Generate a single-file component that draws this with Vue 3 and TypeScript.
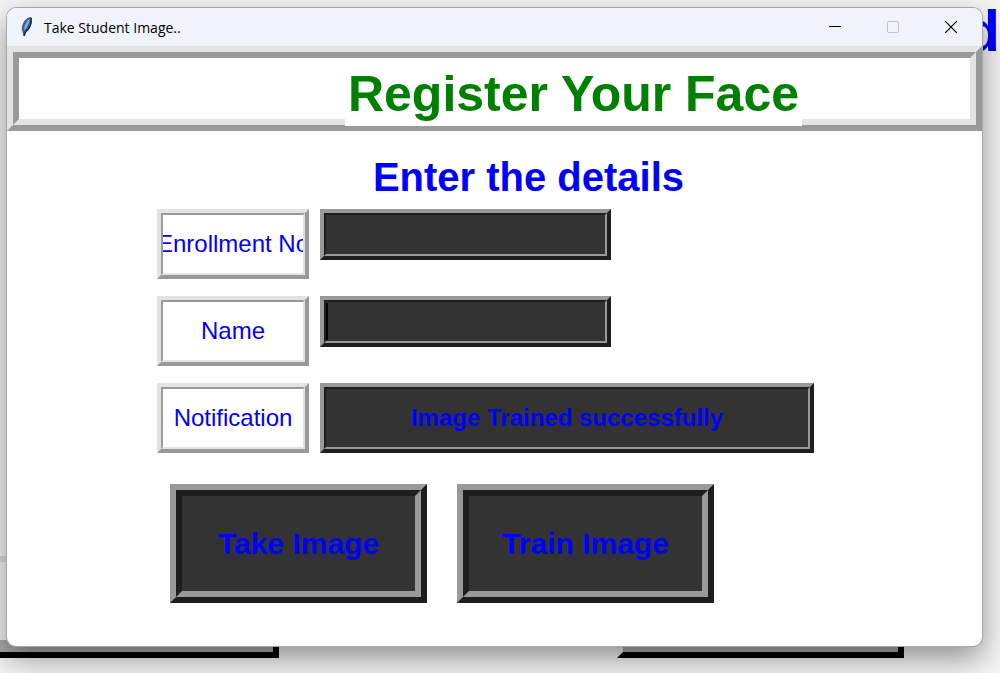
<script setup lang="ts">
import { ref } from 'vue'

const enrollment = ref('')
const studentName = ref('')
const notification = ref('Image Trained successfully')
</script>

<template>
  <div class="desktop">
    <div class="behind" aria-hidden="true">
      <span class="behind-title">d</span>
      <div class="behind-panel"></div>
      <div class="behind-button first"></div>
      <div class="behind-button second"></div>
    </div>

    <main class="window">
      <header class="titlebar">
        <svg class="feather" viewBox="0 0 16 22" width="16" height="22" aria-hidden="true">
          <path d="M12 1.5C8 2 5 5 4 9C3 12 3 14 4 15.5L5 20L6.5 16.5C9.500 14.500 11.500 11 12.200 7Z" fill="#3c6da8" stroke="#4b5058" stroke-width="1" />
          <path d="M10.500 3C7.500 5 5.500 9 5 14L7 12.500C9 9 10.500 6 10.500 3Z" fill="#83add8" />
          <path d="M12.300 2C12.500 6 11 12 6.500 16L5 20" fill="none" stroke="#18243b" stroke-width="1.300" />
        </svg>
        <span class="caption">Take Student Image..</span>
        <button class="control" type="button" aria-label="Minimize">
          <svg viewBox="0 0 12 12" width="12" height="12"><path d="M0 5.500H12" stroke="#000" /></svg>
        </button>
        <button class="control" type="button" aria-label="Maximize" disabled>
          <svg viewBox="0 0 12 12" width="12" height="12"><rect x=".5" y=".5" width="11" height="11" rx="1" fill="none" stroke="#bfc2cc" /></svg>
        </button>
        <button class="control" type="button" aria-label="Close">
          <svg viewBox="0 0 12 12" width="12" height="12"><path d="M0 0L12 12M12 0L0 12" stroke="#000" stroke-width="1.200" /></svg>
        </button>
      </header>

      <div class="banner">
        <div class="banner-inner">
          <h1>Register Your Face</h1>
        </div>
      </div>

      <h2>Enter the details</h2>

      <form class="form" @submit.prevent>
        <div class="row">
          <label class="ridge light" for="enrollment"><span class="inner">Enrollment No</span></label>
          <div class="ridge dark entry"><input id="enrollment" v-model="enrollment" class="inner" type="text" /></div>
        </div>
        <div class="row">
          <label class="ridge light" for="name"><span class="inner">Name</span></label>
          <div class="ridge dark entry">
            <input id="name" v-model="studentName" class="inner" type="text" />
            <span class="caret"></span>
          </div>
        </div>
        <div class="row">
          <label class="ridge light" for="notice"><span class="inner">Notification</span></label>
          <output id="notice" class="ridge dark notice"><span class="inner">{{ notification }}</span></output>
        </div>
        <div class="actions">
          <button class="ridge dark action" type="button"><span class="inner">Take Image</span></button>
          <button class="ridge dark action" type="button"><span class="inner">Train Image</span></button>
        </div>
      </form>
    </main>
  </div>
</template>

<style>
body {
  margin: 0;
}
</style>

<style scoped>
.desktop {
  position: relative;
  box-sizing: border-box;
  min-height: 100vh;
  padding: 8px 18px 26px 7px;
  overflow: hidden;
  background: #f4f4f4;
  font-family: "Liberation Sans", Arial, sans-serif;
}

.behind-title {
  position: absolute;
  top: -2px;
  right: 0;
  color: #00f;
  font-size: 58px;
  font-weight: bold;
  line-height: 66px;
}

.behind-panel {
  position: absolute;
  top: 280px;
  left: 0;
  width: 60px;
  height: 276px;
  border-bottom: 6px solid #ddd;
}

.behind-button {
  position: absolute;
  top: 634px;
  box-sizing: border-box;
  height: 24px;
  border: 6px solid;
  border-color: #eee #000 #000 #eee;
  background: #aaa;
}

.first {
  left: -8px;
  width: 287px;
}

.second {
  left: 617px;
  width: 287px;
}

.window {
  position: relative;
  overflow: hidden;
  border-radius: 9px;
  background: #fff;
  box-shadow: 0 0 0 1px #a8a8a8, 0 12px 30px rgba(0, 0, 0, 0.42);
}

.titlebar {
  display: flex;
  align-items: center;
  height: 38px;
  padding: 0 2px 0 12px;
  background: #f0f3fa;
}

.feather {
  margin-right: 9px;
}

.caption {
  flex: 1;
  color: #000;
  font-family: "Open Sans", "Noto Sans", sans-serif;
  font-size: 14px;
}

.control {
  display: grid;
  place-items: center;
  width: 58px;
  height: 38px;
  padding: 0;
  border: 0;
  background: transparent;
}

.banner {
  border: 6px solid;
  border-color: #e3e3e3 #999 #999 #e3e3e3;
}

.banner-inner {
  display: flex;
  justify-content: center;
  height: 61px;
  padding-left: 158px;
  border: 6px solid;
  border-color: #999 #e3e3e3 #e3e3e3 #999;
}

h1 {
  position: relative;
  height: 68px;
  margin: 0;
  padding: 0 3px;
  background: #fff;
  color: green;
  font-size: 50px;
  line-height: 72px;
  white-space: nowrap;
}

h2 {
  margin: 23px 0 9px;
  padding-left: 68px;
  color: #00f;
  font-size: 40px;
  line-height: 46px;
  text-align: center;
}

.form {
  display: flex;
  flex-direction: column;
  gap: 17px;
  padding: 0 168px 43px 150px;
}

.row {
  display: flex;
  align-items: flex-start;
  gap: 11px;
}

.ridge {
  display: flex;
  box-sizing: border-box;
  height: 70px;
  padding: 0;
  border: 4px solid;
}

.inner {
  display: flex;
  flex: 1;
  align-items: center;
  justify-content: center;
  box-sizing: border-box;
  min-width: 0;
  overflow: hidden;
  border: 2px solid;
  white-space: nowrap;
}

.light {
  flex: none;
  width: 152px;
  border-color: #e3e3e3 #999 #999 #e3e3e3;
  color: #00f;
  font-size: 24px;
}

.light .inner {
  border-color: #999 #e3e3e3 #e3e3e3 #999;
}

.dark {
  border-color: #999 #1e1e1e #1e1e1e #999;
  background: #333;
  color: #00f;
  font-weight: bold;
}

.dark .inner {
  border-color: #1e1e1e #999 #999 #1e1e1e;
}

.entry {
  position: relative;
  width: 291px;
  height: 51px;
}

.entry input {
  border-radius: 0;
  outline: 0;
  background: transparent;
  color: #00f;
  font: bold 24px "Liberation Sans", Arial, sans-serif;
}

.caret {
  position: absolute;
  top: 3px;
  bottom: 3px;
  left: 2px;
  width: 2px;
  background: #000;
}

.notice {
  flex: 1;
  max-width: 494px;
  font-size: 24px;
}

.actions {
  display: flex;
  gap: 30px;
  padding: 14px 0 0 13px;
}

.action {
  width: 257px;
  height: 119px;
  border-width: 6px;
  font-family: inherit;
  font-size: 30px;
}

.action .inner {
  align-self: stretch;
  border-width: 6px;
}
</style>
